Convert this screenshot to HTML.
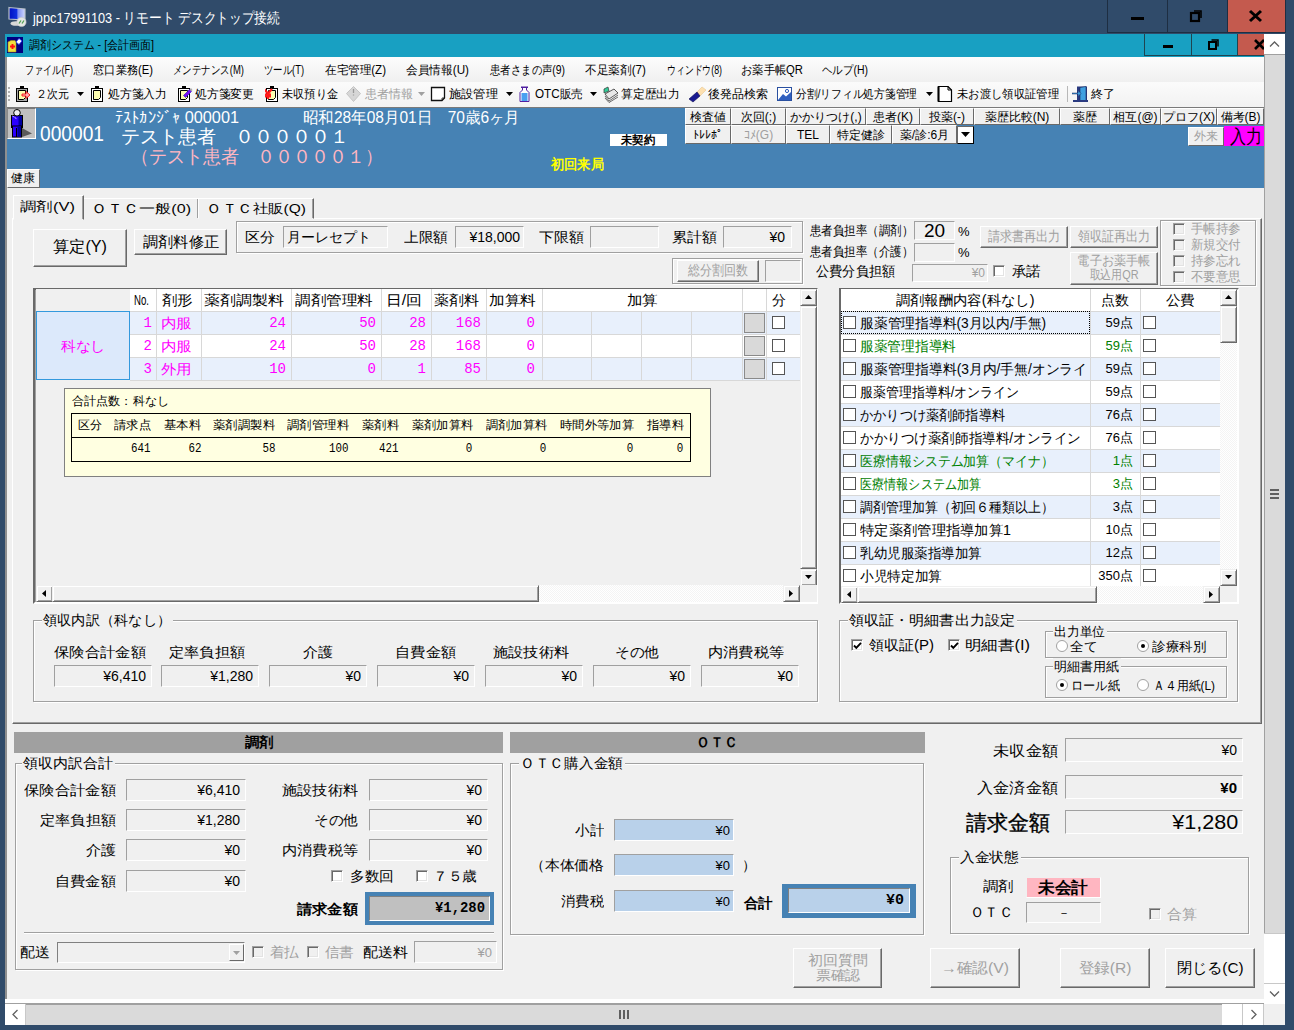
<!DOCTYPE html><html><head><meta charset="utf-8"><style>
*{margin:0;padding:0;box-sizing:border-box}
html,body{width:1294px;height:1030px;overflow:hidden;background:#304b6a;font-family:"Liberation Sans",sans-serif;font-size:12px;color:#000;position:relative}
.a{position:absolute}
.t{position:absolute;white-space:nowrap}
.btn{position:absolute;background:#f0f0f0;border:1px solid;border-color:#fff #696969 #696969 #fff;box-shadow:inset -1px -1px 0 #a0a0a0}
.fld{position:absolute;border:1px solid;border-color:#a0a0a0 #fff #fff #a0a0a0}
.grp{position:absolute;border:1px solid #a0a0a0;box-shadow:inset 1px 1px 0 #fff,1px 1px 0 #fff}
.hb{position:absolute;background:#f0f0f0;border:1px solid;border-color:#fff #696969 #696969 #fff}
</style></head><body><div class="a" style="left:0px;top:0px;width:1294px;height:1030px;background:#304b6a;"></div>
<svg class="a" style="left:7px;top:6px" width="22" height="22"><defs><linearGradient id="scr" x1="0" y1="0" x2="1" y2="0"><stop offset="0" stop-color="#0010c0"/><stop offset=".5" stop-color="#1030e0"/><stop offset=".55" stop-color="#8090f0"/><stop offset="1" stop-color="#d0d8ff"/></linearGradient></defs><path d="M2 1.5 L18 3 V14 L2 13 Z" fill="url(#scr)" stroke="#b8c0c8" stroke-width="1.2"/><ellipse cx="9" cy="17.5" rx="5.5" ry="2.3" fill="#d8d8d8"/><circle cx="14.5" cy="16" r="4.6" fill="#e4e6e4" stroke="#c8c8c8" stroke-width=".6"/><path d="M12 17.5 L14 14.5 M15 17.5 L17 14.5" stroke="#50a050" stroke-width="1.3"/></svg>
<div class="t" style="transform:scaleX(0.8498);transform-origin:left center;top:7.5px;font-size:15px;line-height:19px;color:#fff;left:33px;">jppc17991103 - リモート デスクトップ接続</div>
<div class="a" style="left:1107px;top:0px;width:61px;height:33px;border:1px solid #1e2e42;border-top:none"></div>
<div class="a" style="left:1167px;top:0px;width:61px;height:33px;border:1px solid #1e2e42;border-top:none"></div>
<div class="a" style="left:1227px;top:0px;width:59px;height:33px;background:#c45a4e;border:1px solid #1e2e42;border-top:none"></div>
<div class="a" style="left:1131px;top:17px;width:13px;height:3px;background:#000;"></div>
<svg class="a" style="left:1189px;top:8px" width="16" height="16"><rect x="2" y="5" width="8" height="8" fill="none" stroke="#000" stroke-width="2.2"/><path d="M5 3 H12 V10" fill="none" stroke="#000" stroke-width="1.6"/></svg>
<svg class="a" style="left:1248px;top:9px" width="16" height="14"><path d="M2 2 L13 12 M13 2 L2 12" stroke="#000" stroke-width="3"/></svg>
<div class="a" style="left:5px;top:34px;width:1259px;height:970px;background:#f0f0f0;"></div>
<div class="a" style="left:5px;top:34px;width:2px;height:970px;background:#8f8f8f;"></div>
<div class="a" style="left:5px;top:34px;width:1259px;height:23px;background:#18a0c2;"></div>
<svg class="a" style="left:7px;top:37px" width="16" height="16"><rect width="16" height="16" fill="#000080"/><path d="M1 5 L4 3.5 H8 L9 5 V15 H1 Z" fill="#f0e040" stroke="#a09020" stroke-width=".6"/><path d="M3 9.5 H8 M5.5 7 V12" stroke="#ff1010" stroke-width="1.9"/><path d="M9 5 L12 1.5 L15 4 L12 7.5 Z" fill="#fff" stroke="#2040ff" stroke-width=".8"/></svg>
<div class="t" style="transform:scaleX(0.9101);transform-origin:left center;top:37.0px;font-size:12px;line-height:16px;color:#000;left:29px;">調剤システム - [会計画面]</div>
<div class="a" style="left:1144px;top:34px;width:48px;height:22px;border:1px solid #1f4450;border-top:none"></div>
<div class="a" style="left:1191px;top:34px;width:47px;height:22px;border:1px solid #1f4450;border-top:none;border-left:none"></div>
<div class="a" style="left:1238px;top:34px;width:26px;height:22px;background:#c45a4e;border-bottom:1px solid #1f4450"></div>
<div class="a" style="left:1163px;top:45px;width:10px;height:3px;background:#000;"></div>
<svg class="a" style="left:1207px;top:38px" width="14" height="13"><rect x="2" y="4" width="7" height="7" fill="none" stroke="#000" stroke-width="2"/><path d="M4.5 2 H11 V8.5" fill="none" stroke="#000" stroke-width="1.5"/></svg>
<svg class="a" style="left:1254px;top:39px" width="12" height="12"><path d="M1 1 L10 10 M10 1 L1 10" stroke="#000" stroke-width="2.6"/></svg>
<div class="a" style="left:7px;top:57px;width:1257px;height:25px;background:#f5f5f5;background:linear-gradient(#fcfcfc,#f0f0f0)"></div>
<div class="t" style="transform:scaleX(0.7580);transform-origin:left center;top:62.0px;font-size:12px;line-height:16px;color:#000;left:25px;">ファイル(F)</div>
<div class="t" style="transform:scaleX(0.9375);transform-origin:left center;top:62.0px;font-size:12px;line-height:16px;color:#000;left:93px;">窓口業務(E)</div>
<div class="t" style="transform:scaleX(0.7889);transform-origin:left center;top:62.0px;font-size:12px;line-height:16px;color:#000;left:173px;">メンテナンス(M)</div>
<div class="t" style="transform:scaleX(0.7793);transform-origin:left center;top:62.0px;font-size:12px;line-height:16px;color:#000;left:264px;">ツール(T)</div>
<div class="t" style="transform:scaleX(0.9632);transform-origin:left center;top:62.0px;font-size:12px;line-height:16px;color:#000;left:325px;">在宅管理(Z)</div>
<div class="t" style="transform:scaleX(0.9741);transform-origin:left center;top:62.0px;font-size:12px;line-height:16px;color:#000;left:406px;">会員情報(U)</div>
<div class="t" style="transform:scaleX(0.8653);transform-origin:left center;top:62.0px;font-size:12px;line-height:16px;color:#000;left:490px;">患者さまの声(9)</div>
<div class="t" style="transform:scaleX(0.9733);transform-origin:left center;top:62.0px;font-size:12px;line-height:16px;color:#000;left:585px;">不足薬剤(7)</div>
<div class="t" style="transform:scaleX(0.7366);transform-origin:left center;top:62.0px;font-size:12px;line-height:16px;color:#000;left:667px;">ウィンドウ(8)</div>
<div class="t" style="transform:scaleX(0.9394);transform-origin:left center;top:62.0px;font-size:12px;line-height:16px;color:#000;left:741px;">お薬手帳QR</div>
<div class="t" style="transform:scaleX(0.8733);transform-origin:left center;top:62.0px;font-size:12px;line-height:16px;color:#000;left:822px;">ヘルプ(H)</div>
<div class="a" style="left:7px;top:82px;width:1257px;height:25px;background:linear-gradient(#fbfbfb,#f2f2f2)"></div>
<div class="a" style="left:7px;top:107px;width:1257px;height:1px;background:#7a7a7a;"></div>
<div class="a" style="left:8px;top:87px;width:2px;height:2px;background:#b0b0b0;"></div>
<div class="a" style="left:8px;top:91px;width:2px;height:2px;background:#b0b0b0;"></div>
<div class="a" style="left:8px;top:95px;width:2px;height:2px;background:#b0b0b0;"></div>
<div class="a" style="left:8px;top:99px;width:2px;height:2px;background:#b0b0b0;"></div>
<svg class="a" style="left:15px;top:85px" width="22" height="18"><rect x="1.5" y="3.5" width="11" height="13" fill="#a8a8a8" stroke="#000"/><rect x="5" y="1" width="4" height="2.5" fill="#000"/><path d="M3.5 5.5 H10.5 V12.5 L8.5 14.5 H3.5 Z" fill="#fdfdb0" stroke="#000"/><path d="M7 9 H11 V6.5 L15 10 L11 13.5 V11 H7 Z" fill="#ffb0b0" stroke="#ff1010" stroke-width=".9"/></svg>
<div class="t" style="transform:scaleX(0.9167);transform-origin:left center;top:86.0px;font-size:12px;line-height:16px;color:#000;left:36px;">２次元</div>
<svg class="a" style="left:77px;top:92px" width="7" height="4"><path d="M0 0 H7 L3.5 4 Z" fill="#000"/></svg>
<svg class="a" style="left:90px;top:85px" width="22" height="18"><rect x="1.5" y="3.5" width="11" height="13" fill="#fff" stroke="#000"/><rect x="5" y="1" width="4" height="2.5" fill="#000"/><path d="M3.5 5.5 H10.5 V12.5 L8.5 14.5 H3.5 Z" fill="#fdfdb0" stroke="#000"/></svg>
<div class="t" style="transform:scaleX(0.9833);transform-origin:left center;top:86.0px;font-size:12px;line-height:16px;color:#000;left:108px;">処方箋入力</div>
<svg class="a" style="left:177px;top:85px" width="22" height="18"><rect x="1.5" y="3.5" width="11" height="13" fill="#fff" stroke="#000"/><rect x="5" y="1" width="4" height="2.5" fill="#000"/><path d="M3.5 5.5 H10.5 V12.5 L8.5 14.5 H3.5 Z" fill="#fdfdb0" stroke="#000"/><path d="M6.5 10.5 L12.5 4.5 L14.5 6.5 L8.5 12.5 Z" fill="#7a10f0" stroke="#2010c0" stroke-width=".6"/><path d="M12.5 4.5 L14 3 L15.5 5 L14.5 6.5 Z" fill="#aaa"/></svg>
<div class="t" style="transform:scaleX(0.9833);transform-origin:left center;top:86.0px;font-size:12px;line-height:16px;color:#000;left:195px;">処方箋変更</div>
<svg class="a" style="left:265px;top:85px" width="22" height="18"><rect x="1.5" y="3.5" width="11" height="13" fill="#fff" stroke="#000"/><rect x="5" y="1" width="4" height="2.5" fill="#000"/><path d="M3.5 5.5 H10.5 V12.5 L8.5 14.5 H3.5 Z" fill="#fdfdb0" stroke="#000"/><path d="M-1 4 L3 8.5 L7 4 M3 8.5 V14 M0 9.5 H6 M0 11.5 H6" stroke="#ff1a1a" stroke-width="2.2" fill="none"/></svg>
<div class="t" style="transform:scaleX(0.9333);transform-origin:left center;top:86.0px;font-size:12px;line-height:16px;color:#000;left:282px;">未収預り金</div>
<svg class="a" style="left:345px;top:85px" width="18" height="18"><path d="M8.5 1.5 L15.5 8.5 L8.5 16.5 L1.5 8.5 Z" fill="#d6d6d6" stroke="#c4c4c4"/><path d="M8.5 4 V8 M8.5 9.5 V10.5" stroke="#9a9a9a" stroke-width="1.3"/></svg>
<div class="t" style="transform:scaleX(1.0000);transform-origin:left center;top:86.0px;font-size:12px;line-height:16px;color:#a0a0a0;left:365px;">患者情報</div>
<svg class="a" style="left:418px;top:92px" width="7" height="4"><path d="M0 0 H7 L3.5 4 Z" fill="#a0a0a0"/></svg>
<svg class="a" style="left:430px;top:86px" width="16" height="16"><path d="M1.5 1.5 H14.5 V12 L12 14.5 H1.5 Z" fill="#fff" stroke="#111" stroke-width="1.3"/><path d="M12 14.5 V12 H14.5" fill="none" stroke="#111" stroke-width=".8"/></svg>
<div class="t" style="transform:scaleX(1.0208);transform-origin:left center;top:86.0px;font-size:12px;line-height:16px;color:#000;left:449px;">施設管理</div>
<svg class="a" style="left:506px;top:92px" width="7" height="4"><path d="M0 0 H7 L3.5 4 Z" fill="#000"/></svg>
<svg class="a" style="left:519px;top:86px" width="12" height="16"><rect x="2" y="0.5" width="7" height="1.5" fill="#5020a0"/><path d="M3.5 2 V4 L1 6.5 V15.5 H10 V6.5 L7.5 4 V2" fill="#fff" stroke="#5020a0"/><rect x="2.5" y="7" width="6" height="8" fill="#4aa0f0"/></svg>
<div class="t" style="transform:scaleX(0.9728);transform-origin:left center;top:86.0px;font-size:12px;line-height:16px;color:#000;left:535px;">OTC販売</div>
<svg class="a" style="left:590px;top:92px" width="7" height="4"><path d="M0 0 H7 L3.5 4 Z" fill="#000"/></svg>
<svg class="a" style="left:601px;top:85px" width="18" height="18"><path d="M4 9 L13 4 L17 8 L8 14 Z" fill="#e8e8e8" stroke="#333" stroke-width=".8"/><path d="M4 11 L8 16 L17 10 M4 13 L8 17.5 L17 12" fill="none" stroke="#444" stroke-width=".8"/><path d="M3 8 L3 4 L7 2 L8 6 Z" fill="#3c9" stroke="#333" stroke-width=".7"/></svg>
<div class="t" style="transform:scaleX(0.9833);transform-origin:left center;top:86.0px;font-size:12px;line-height:16px;color:#000;left:621px;">算定歴出力</div>
<svg class="a" style="left:688px;top:85px" width="18" height="18"><path d="M9 7 L14 2 L18 5 L12 11 Z" fill="#fde0b0" stroke="#e8c890" stroke-width=".6"/><path d="M1 14 L9 7 L12 11 L5 17 Z" fill="#1a1a90" stroke="#0a0a50" stroke-width=".6"/></svg>
<div class="t" style="transform:scaleX(1.0000);transform-origin:left center;top:86.0px;font-size:12px;line-height:16px;color:#000;left:708px;">後発品検索</div>
<svg class="a" style="left:777px;top:87px" width="15" height="14"><rect x="0.5" y="0.5" width="14" height="13" fill="#fff" stroke="#2a50a0"/><path d="M1 13 L6 7 L9 9.5 L14 5 V13 Z" fill="#3060c0"/><circle cx="10" cy="4" r="1.6" fill="none" stroke="#3060c0"/></svg>
<div class="t" style="transform:scaleX(0.8940);transform-origin:left center;top:86.0px;font-size:12px;line-height:16px;color:#000;left:796px;">分割/リフィル処方箋管理</div>
<svg class="a" style="left:926px;top:92px" width="7" height="4"><path d="M0 0 H7 L3.5 4 Z" fill="#000"/></svg>
<svg class="a" style="left:937px;top:86px" width="16" height="16"><path d="M1.5 0.5 H11 L14.5 4 V15.5 H1.5 Z" fill="#fff" stroke="#000" stroke-width="1.2"/><rect x="0.5" y="0.5" width="2" height="15" fill="#000"/><path d="M11 0.5 V4 H14.5" fill="none" stroke="#000"/></svg>
<div class="t" style="transform:scaleX(0.9444);transform-origin:left center;top:86.0px;font-size:12px;line-height:16px;color:#000;left:957px;">未お渡し領収証管理</div>
<div class="a" style="left:1067px;top:86px;width:1px;height:16px;background:#b8b8b8;"></div>
<svg class="a" style="left:1072px;top:86px" width="16" height="16"><rect x="5" y="0.5" width="10" height="14" fill="#2a3a80"/><path d="M8 1.5 L14 0.5 V14.5 L8 15.5 Z" fill="#3fa0e0" stroke="#1a2a60" stroke-width=".6"/><path d="M0 7 H6 V4.5 L9 7.5 L6 10.5 V8 H0 Z" fill="#3fa0e0" stroke="#1a2a60" stroke-width=".5"/><rect x="1" y="14" width="15" height="2" fill="#2a3a80"/></svg>
<div class="t" style="transform:scaleX(1.0000);transform-origin:left center;top:86.0px;font-size:12px;line-height:16px;color:#000;left:1091px;">終了</div>
<div class="a" style="left:7px;top:108px;width:1257px;height:80px;background:#4682b4;"></div>
<div class="a" style="left:7px;top:108px;width:29px;height:31px;background:#c0c0c0;border:1px solid;border-color:#7a7a7a #fff #fff #8a8a8a"></div>
<svg class="a" style="left:7px;top:109px" width="28" height="30"><path d="M15 19 L25 24.5 L15 28 Z" fill="#5a5a5a"/><rect x="4.5" y="6.5" width="11" height="12" fill="#2a00ff" stroke="#000"/><path d="M11.5 7 H15 V18 H11.5 Z" fill="#0000a0"/><rect x="5.5" y="17" width="9" height="11" fill="#2a00ff" stroke="#000"/><path d="M10.5 17.5 H14 V27.5 H10.5 Z" fill="#0000a0"/><path d="M9.5 19 V28" stroke="#000"/><path d="M5.5 7 L10 10" stroke="#fff" stroke-width="1" stroke-dasharray="1.5 1"/><circle cx="10" cy="3.8" r="3.3" fill="#f0f0f0" stroke="#000" stroke-width="1"/></svg>
<div class="t" style="transform:scaleX(0.8717);transform-origin:left center;top:121.0px;font-size:22px;line-height:26px;color:#fff;left:40px;">000001</div>
<div class="t" style="transform:scaleX(1.0177);transform-origin:left center;top:107.5px;font-size:16px;line-height:20px;color:#fff;left:115px;">ﾃｽﾄｶﾝｼﾞｬ 000001</div>
<div class="t" style="transform:scaleX(0.9683);transform-origin:left center;top:108.0px;font-size:16px;line-height:20px;color:#fff;left:303px;">昭和28年08月01日　70歳6ヶ月</div>
<div class="t" style="transform:scaleX(1.0000);transform-origin:left center;top:124.5px;font-size:19px;line-height:23px;color:#fff;left:121px;">テスト患者　０００００１</div>
<div class="t" style="transform:scaleX(0.9474);transform-origin:left center;top:144.5px;font-size:19px;line-height:23px;color:#ffb6c1;left:131px;">（テスト患者　０００００１）</div>
<div class="a" style="left:610px;top:134px;width:57px;height:12px;background:#fff;"></div>
<div class="t" style="transform:translateX(-50%) scaleX(0.9444);transform-origin:center center;top:132.0px;font-size:12px;line-height:16px;color:#000;font-weight:bold;left:638px;">未契約</div>
<div class="t" style="transform:scaleX(0.9464);transform-origin:left center;top:155.0px;font-size:14px;line-height:18px;color:#ffff00;font-weight:bold;left:551px;">初回来局</div>
<div class="hb" style="left:7px;top:169px;width:33px;height:19px;"></div>
<div class="t" style="transform:scaleX(1.0000);transform-origin:left center;top:170.0px;font-size:12px;line-height:16px;color:#000;left:11px;">健康</div>
<div class="a" style="left:685px;top:108px;width:894px;height:0px;"></div>
<div class="hb" style="left:685px;top:108px;width:46px;height:17px;"></div>
<div class="t" style="transform:translateX(-50%);transform-origin:center center;top:108.5px;font-size:12px;line-height:16px;color:#000;left:708.0px;">検査値</div>
<div class="hb" style="left:731px;top:108px;width:55px;height:17px;"></div>
<div class="t" style="transform:translateX(-50%);transform-origin:center center;top:108.5px;font-size:12px;line-height:16px;color:#000;left:758.5px;">次回(;)</div>
<div class="hb" style="left:786px;top:108px;width:80px;height:17px;"></div>
<div class="t" style="transform:translateX(-50%);transform-origin:center center;top:108.5px;font-size:12px;line-height:16px;color:#000;left:826.0px;">かかりつけ(,)</div>
<div class="hb" style="left:866px;top:108px;width:54px;height:17px;"></div>
<div class="t" style="transform:translateX(-50%);transform-origin:center center;top:108.5px;font-size:12px;line-height:16px;color:#000;left:893.0px;">患者(K)</div>
<div class="hb" style="left:920px;top:108px;width:54px;height:17px;"></div>
<div class="t" style="transform:translateX(-50%);transform-origin:center center;top:108.5px;font-size:12px;line-height:16px;color:#000;left:947.0px;">投薬(-)</div>
<div class="hb" style="left:974px;top:108px;width:86px;height:17px;"></div>
<div class="t" style="transform:translateX(-50%);transform-origin:center center;top:108.5px;font-size:12px;line-height:16px;color:#000;left:1017.0px;">薬歴比較(N)</div>
<div class="hb" style="left:1060px;top:108px;width:50px;height:17px;"></div>
<div class="t" style="transform:translateX(-50%);transform-origin:center center;top:108.5px;font-size:12px;line-height:16px;color:#000;left:1085.0px;">薬歴</div>
<div class="hb" style="left:1110px;top:108px;width:51px;height:17px;"></div>
<div class="t" style="transform:translateX(-50%);transform-origin:center center;top:108.5px;font-size:12px;line-height:16px;color:#000;left:1135.5px;">相互(@)</div>
<div class="hb" style="left:1161px;top:108px;width:56px;height:17px;"></div>
<div class="t" style="transform:translateX(-50%);transform-origin:center center;top:108.5px;font-size:12px;line-height:16px;color:#000;left:1189.0px;">プロフ(X)</div>
<div class="hb" style="left:1217px;top:108px;width:47px;height:17px;"></div>
<div class="t" style="transform:translateX(-50%);transform-origin:center center;top:108.5px;font-size:12px;line-height:16px;color:#000;left:1240.5px;">備考(B)</div>
<div class="hb" style="left:685px;top:125px;width:46px;height:19px;"></div>
<div class="t" style="transform:translateX(-50%);transform-origin:center center;top:126.5px;font-size:12px;line-height:16px;color:#000;left:708.0px;">ﾄﾚﾚﾎﾟ</div>
<div class="hb" style="left:731px;top:125px;width:55px;height:19px;"></div>
<div class="t" style="transform:translateX(-50%);transform-origin:center center;top:126.5px;font-size:12px;line-height:16px;color:#a0a0a0;left:758.5px;">ｺﾒ(G)</div>
<div class="hb" style="left:786px;top:125px;width:44px;height:19px;"></div>
<div class="t" style="transform:translateX(-50%);transform-origin:center center;top:126.5px;font-size:12px;line-height:16px;color:#000;left:808.0px;">TEL</div>
<div class="hb" style="left:830px;top:125px;width:62px;height:19px;"></div>
<div class="t" style="transform:translateX(-50%);transform-origin:center center;top:126.5px;font-size:12px;line-height:16px;color:#000;left:861.0px;">特定健診</div>
<div class="hb" style="left:892px;top:125px;width:65px;height:19px;"></div>
<div class="t" style="transform:translateX(-50%);transform-origin:center center;top:126.5px;font-size:12px;line-height:16px;color:#000;left:924.5px;">薬/診:6月</div>
<div class="a" style="left:957px;top:126px;width:17px;height:18px;background:#fff;border:1px solid #000;border-top-color:#696969;border-left-color:#696969"></div>
<svg class="a" style="left:961px;top:132px" width="9" height="5"><path d="M0 0 H9 L4.5 5 Z" fill="#000"/></svg>
<div class="hb" style="left:1188px;top:127px;width:36px;height:19px;"></div>
<div class="t" style="transform:translateX(-50%);transform-origin:center center;top:128.0px;font-size:12px;line-height:16px;color:#a0a0a0;left:1206px;">外来</div>
<div class="a" style="left:1224px;top:126px;width:40px;height:20px;background:#ff00ff;"></div>
<div class="t" style="transform:translateX(-50%) scaleX(0.8421);transform-origin:center center;top:124.5px;font-size:19px;line-height:23px;color:#000;left:1246px;">入力</div>
<div class="a" style="left:12px;top:218px;width:1250px;height:506px;border:1px solid;border-color:#fff #696969 #696969 #fff;box-shadow:inset -1px -1px 0 #a0a0a0"></div>
<div class="a" style="left:83px;top:198px;width:116px;height:21px;background:#f0f0f0;border:1px solid;border-color:#fff #696969 transparent #fff;box-shadow:inset -1px 0 0 #a0a0a0"></div>
<div class="t" style="transform:scaleX(1.2362);transform-origin:left center;top:199.5px;font-size:13px;line-height:17px;color:#000;left:91px;">ＯＴＣ一般(0)</div>
<div class="a" style="left:198px;top:198px;width:116px;height:21px;background:#f0f0f0;border:1px solid;border-color:#fff #696969 transparent #fff;box-shadow:inset -1px 0 0 #a0a0a0"></div>
<div class="t" style="transform:scaleX(1.1936);transform-origin:left center;top:199.5px;font-size:13px;line-height:17px;color:#000;left:206px;">ＯＴＣ社販(Q)</div>
<div class="a" style="left:13px;top:195px;width:71px;height:25px;background:#f0f0f0;border:1px solid;border-color:#fff #696969 transparent #fff;box-shadow:inset -1px 0 0 #a0a0a0"></div>
<div class="t" style="transform:scaleX(1.2689);transform-origin:left center;top:197.5px;font-size:13px;line-height:17px;color:#000;left:20px;">調剤(V)</div>
<div class="btn" style="left:33px;top:229px;width:94px;height:38px;"></div>
<div class="t" style="transform:translateX(-50%) scaleX(1.0126);transform-origin:center center;top:237.0px;font-size:16px;line-height:20px;color:#000;left:80.0px;">算定(Y)</div>
<div class="btn" style="left:134px;top:229px;width:93px;height:26px;"></div>
<div class="t" style="transform:translateX(-50%) scaleX(1.0133);transform-origin:center center;top:231.5px;font-size:15px;line-height:19px;color:#000;left:180.5px;">調剤料修正</div>
<div class="grp" style="left:236px;top:221px;width:567px;height:32px;"></div>
<div class="t" style="transform:scaleX(1.0714);transform-origin:left center;top:228.0px;font-size:14px;line-height:18px;color:#000;left:245px;">区分</div>
<div class="fld" style="left:283px;top:226px;width:105px;height:22px;background:#f0f0f0"></div>
<div class="t" style="top:228.0px;font-size:14px;line-height:18px;color:#000;left:287px;">月ーレセプト</div>
<div class="t" style="transform:scaleX(1.0476);transform-origin:left center;top:228.0px;font-size:14px;line-height:18px;color:#000;left:404px;">上限額</div>
<div class="fld" style="left:455px;top:226px;width:69px;height:22px;background:#f0f0f0"></div>
<div class="t" style="top:228.0px;font-size:14px;line-height:18px;color:#000;right:774px;">¥18,000</div>
<div class="t" style="transform:scaleX(1.0714);transform-origin:left center;top:228.0px;font-size:14px;line-height:18px;color:#000;left:539px;">下限額</div>
<div class="fld" style="left:590px;top:226px;width:69px;height:22px;background:#f0f0f0"></div>
<div class="t" style="transform:scaleX(1.0714);transform-origin:left center;top:228.0px;font-size:14px;line-height:18px;color:#000;left:672px;">累計額</div>
<div class="fld" style="left:723px;top:226px;width:69px;height:22px;background:#f0f0f0"></div>
<div class="t" style="top:228.0px;font-size:14px;line-height:18px;color:#000;right:509px;">¥0</div>
<div class="grp" style="left:672px;top:258px;width:131px;height:26px;"></div>
<div class="btn" style="left:677px;top:260px;width:82px;height:22px;"></div>
<div class="t" style="transform:translateX(-50%) scaleX(0.8571);transform-origin:center center;top:261.0px;font-size:14px;line-height:18px;color:#a0a0a0;left:718.0px;">総分割回数</div>
<div class="fld" style="left:765px;top:260px;width:36px;height:22px;background:#f0f0f0"></div>
<div class="t" style="transform:scaleX(0.8803);transform-origin:left center;top:221.5px;font-size:13px;line-height:17px;color:#000;left:810px;">患者負担率（調剤）</div>
<div class="fld" style="left:914px;top:221px;width:41px;height:19px;background:#f0f0f0"></div>
<div class="t" style="transform:translateX(-50%);transform-origin:center center;top:219.0px;font-size:19px;line-height:23px;color:#000;left:934.5px;">20</div>
<div class="t" style="top:222.5px;font-size:13px;line-height:17px;color:#000;left:958px;">%</div>
<div class="t" style="transform:scaleX(0.8803);transform-origin:left center;top:242.5px;font-size:13px;line-height:17px;color:#000;left:810px;">患者負担率（介護）</div>
<div class="fld" style="left:914px;top:243px;width:41px;height:19px;background:#f0f0f0"></div>
<div class="t" style="top:243.5px;font-size:13px;line-height:17px;color:#000;left:958px;">%</div>
<div class="t" style="transform:scaleX(0.9405);transform-origin:left center;top:262.0px;font-size:14px;line-height:18px;color:#000;left:816px;">公費分負担額</div>
<div class="fld" style="left:912px;top:264px;width:76px;height:18px;background:#f0f0f0"></div>
<div class="t" style="top:265.0px;font-size:12px;line-height:16px;color:#a0a0a0;right:309px;">¥0</div>
<div class="a" style="left:993px;top:265px;width:12px;height:12px;border:1px solid;border-color:#a0a0a0 #fff #fff #a0a0a0;box-shadow:inset 1px 1px 0 #696969,inset -1px -1px 0 #e3e3e3;background:#fff"></div>
<div class="t" style="transform:scaleX(1.0357);transform-origin:left center;top:262.0px;font-size:14px;line-height:18px;color:#000;left:1012px;">承諾</div>
<div class="btn" style="left:980px;top:226px;width:88px;height:22px;"></div>
<div class="t" style="transform:translateX(-50%) scaleX(0.8690);transform-origin:center center;top:227.0px;font-size:14px;line-height:18px;color:#a0a0a0;left:1024.0px;">請求書再出力</div>
<div class="btn" style="left:1070px;top:226px;width:88px;height:22px;"></div>
<div class="t" style="transform:translateX(-50%) scaleX(0.8690);transform-origin:center center;top:227.0px;font-size:14px;line-height:18px;color:#a0a0a0;left:1114.0px;">領収証再出力</div>
<div class="btn" style="left:1070px;top:252px;width:88px;height:33px;"></div>
<div class="t" style="transform:translateX(-50%) scaleX(0.9359);transform-origin:center center;top:252.0px;font-size:13px;line-height:17px;color:#a0a0a0;left:1114.0px;">電子お薬手帳</div>
<div class="t" style="transform:translateX(-50%) scaleX(0.8376);transform-origin:center center;top:266.0px;font-size:13px;line-height:17px;color:#a0a0a0;left:1114.0px;">取込用QR</div>
<div class="grp" style="left:1160px;top:220px;width:96px;height:66px;"></div>
<div class="a" style="left:1173px;top:222.5px;width:12px;height:12px;border:1px solid;border-color:#a0a0a0 #fff #fff #a0a0a0;box-shadow:inset 1px 1px 0 #696969,inset -1px -1px 0 #e3e3e3;background:#f0f0f0"></div>
<div class="t" style="transform:scaleX(0.9615);transform-origin:left center;top:220.0px;font-size:13px;line-height:17px;color:#a0a0a0;left:1191px;">手帳持参</div>
<div class="a" style="left:1173px;top:238.5px;width:12px;height:12px;border:1px solid;border-color:#a0a0a0 #fff #fff #a0a0a0;box-shadow:inset 1px 1px 0 #696969,inset -1px -1px 0 #e3e3e3;background:#f0f0f0"></div>
<div class="t" style="transform:scaleX(0.9615);transform-origin:left center;top:236.0px;font-size:13px;line-height:17px;color:#a0a0a0;left:1191px;">新規交付</div>
<div class="a" style="left:1173px;top:254.5px;width:12px;height:12px;border:1px solid;border-color:#a0a0a0 #fff #fff #a0a0a0;box-shadow:inset 1px 1px 0 #696969,inset -1px -1px 0 #e3e3e3;background:#f0f0f0"></div>
<div class="t" style="transform:scaleX(0.9615);transform-origin:left center;top:252.0px;font-size:13px;line-height:17px;color:#a0a0a0;left:1191px;">持参忘れ</div>
<div class="a" style="left:1173px;top:270.5px;width:12px;height:12px;border:1px solid;border-color:#a0a0a0 #fff #fff #a0a0a0;box-shadow:inset 1px 1px 0 #696969,inset -1px -1px 0 #e3e3e3;background:#f0f0f0"></div>
<div class="t" style="transform:scaleX(0.9615);transform-origin:left center;top:268.0px;font-size:13px;line-height:17px;color:#a0a0a0;left:1191px;">不要意思</div>
<div class="a" style="left:33px;top:288px;width:785px;height:316px;background:#f0f0f0;border:2px solid;border-color:#696969 #fff #fff #696969;box-shadow:inset 1px 1px 0 #a0a0a0"></div>
<div class="a" style="left:36px;top:289px;width:94px;height:22px;background:#f0f0f0;"></div>
<div class="a" style="left:130px;top:289px;width:670px;height:22px;background:#fff;"></div>
<div class="t" style="transform:scaleX(0.6882);transform-origin:left center;top:291.0px;font-size:14px;line-height:18px;color:#000;left:134px;">No.</div>
<div class="t" style="transform:scaleX(1.1071);transform-origin:left center;top:291.0px;font-size:14px;line-height:18px;color:#000;left:162px;">剤形</div>
<div class="t" style="transform:scaleX(1.1429);transform-origin:left center;top:291.0px;font-size:14px;line-height:18px;color:#000;left:204px;">薬剤調製料</div>
<div class="t" style="transform:scaleX(1.1143);transform-origin:left center;top:291.0px;font-size:14px;line-height:18px;color:#000;left:295px;">調剤管理料</div>
<div class="t" style="transform:scaleX(1.1289);transform-origin:left center;top:291.0px;font-size:14px;line-height:18px;color:#000;left:386px;">日/回</div>
<div class="t" style="transform:scaleX(1.0714);transform-origin:left center;top:291.0px;font-size:14px;line-height:18px;color:#000;left:434px;">薬剤料</div>
<div class="t" style="transform:scaleX(1.1190);transform-origin:left center;top:291.0px;font-size:14px;line-height:18px;color:#000;left:489px;">加算料</div>
<div class="t" style="transform:translateX(-50%) scaleX(1.1071);transform-origin:center center;top:291.0px;font-size:14px;line-height:18px;color:#000;left:642px;">加算</div>
<div class="t" style="transform:translateX(-50%) scaleX(1.0000);transform-origin:center center;top:291.0px;font-size:14px;line-height:18px;color:#000;left:779px;">分</div>
<div class="a" style="left:130px;top:311px;width:670px;height:23px;background:#e8f0fc;"></div>
<div class="a" style="left:130px;top:334px;width:670px;height:23px;background:#fff;"></div>
<div class="a" style="left:130px;top:357px;width:670px;height:23px;background:#e8f0fc;"></div>
<div class="a" style="left:156px;top:289px;width:1px;height:91px;background:#d8d8d8;"></div>
<div class="a" style="left:201px;top:289px;width:1px;height:91px;background:#d8d8d8;"></div>
<div class="a" style="left:291px;top:289px;width:1px;height:91px;background:#d8d8d8;"></div>
<div class="a" style="left:381px;top:289px;width:1px;height:91px;background:#d8d8d8;"></div>
<div class="a" style="left:431px;top:289px;width:1px;height:91px;background:#d8d8d8;"></div>
<div class="a" style="left:486px;top:289px;width:1px;height:91px;background:#d8d8d8;"></div>
<div class="a" style="left:542px;top:289px;width:1px;height:91px;background:#d8d8d8;"></div>
<div class="a" style="left:742px;top:289px;width:1px;height:91px;background:#d8d8d8;"></div>
<div class="a" style="left:766px;top:289px;width:1px;height:91px;background:#d8d8d8;"></div>
<div class="a" style="left:591px;top:311px;width:1px;height:69px;background:#d8d8d8;"></div>
<div class="a" style="left:641px;top:311px;width:1px;height:69px;background:#d8d8d8;"></div>
<div class="a" style="left:691px;top:311px;width:1px;height:69px;background:#d8d8d8;"></div>
<div class="a" style="left:130px;top:311px;width:670px;height:1px;background:#d8d8d8;"></div>
<div class="a" style="left:130px;top:334px;width:670px;height:1px;background:#d8d8d8;"></div>
<div class="a" style="left:130px;top:357px;width:670px;height:1px;background:#d8d8d8;"></div>
<div class="a" style="left:130px;top:380px;width:670px;height:1px;background:#d8d8d8;"></div>
<div class="a" style="left:36px;top:311px;width:94px;height:69px;background:#dce9fb;border:1px solid #3399dd"></div>
<div class="t" style="transform:translateX(-50%) scaleX(1.0714);transform-origin:center center;top:337.0px;font-size:14px;line-height:18px;color:#ff00ff;left:83px;">科なし</div>
<div class="t" style="top:314.0px;font-size:14px;line-height:18px;color:#ff00ff;font-family:'Liberation Mono',monospace;right:1142px;">1</div>
<div class="t" style="transform:scaleX(1.1071);transform-origin:left center;top:314.0px;font-size:14px;line-height:18px;color:#ff00ff;left:161px;">内服</div>
<div class="t" style="top:314.0px;font-size:14px;line-height:18px;color:#ff00ff;font-family:'Liberation Mono',monospace;right:1008px;">24</div>
<div class="t" style="top:314.0px;font-size:14px;line-height:18px;color:#ff00ff;font-family:'Liberation Mono',monospace;right:918px;">50</div>
<div class="t" style="top:314.0px;font-size:14px;line-height:18px;color:#ff00ff;font-family:'Liberation Mono',monospace;right:868px;">28</div>
<div class="t" style="top:314.0px;font-size:14px;line-height:18px;color:#ff00ff;font-family:'Liberation Mono',monospace;right:813px;">168</div>
<div class="t" style="top:314.0px;font-size:14px;line-height:18px;color:#ff00ff;font-family:'Liberation Mono',monospace;right:759px;">0</div>
<div class="a" style="left:744px;top:313px;width:21px;height:20px;background:#d9d9d9;border:1px solid #8a8a8a"></div>
<div class="a" style="left:772px;top:316px;width:13px;height:13px;border:1px solid #555;background:#fff"></div>
<div class="t" style="top:337.0px;font-size:14px;line-height:18px;color:#ff00ff;font-family:'Liberation Mono',monospace;right:1142px;">2</div>
<div class="t" style="transform:scaleX(1.1071);transform-origin:left center;top:337.0px;font-size:14px;line-height:18px;color:#ff00ff;left:161px;">内服</div>
<div class="t" style="top:337.0px;font-size:14px;line-height:18px;color:#ff00ff;font-family:'Liberation Mono',monospace;right:1008px;">24</div>
<div class="t" style="top:337.0px;font-size:14px;line-height:18px;color:#ff00ff;font-family:'Liberation Mono',monospace;right:918px;">50</div>
<div class="t" style="top:337.0px;font-size:14px;line-height:18px;color:#ff00ff;font-family:'Liberation Mono',monospace;right:868px;">28</div>
<div class="t" style="top:337.0px;font-size:14px;line-height:18px;color:#ff00ff;font-family:'Liberation Mono',monospace;right:813px;">168</div>
<div class="t" style="top:337.0px;font-size:14px;line-height:18px;color:#ff00ff;font-family:'Liberation Mono',monospace;right:759px;">0</div>
<div class="a" style="left:744px;top:336px;width:21px;height:20px;background:#d9d9d9;border:1px solid #8a8a8a"></div>
<div class="a" style="left:772px;top:339px;width:13px;height:13px;border:1px solid #555;background:#fff"></div>
<div class="t" style="top:360.0px;font-size:14px;line-height:18px;color:#ff00ff;font-family:'Liberation Mono',monospace;right:1142px;">3</div>
<div class="t" style="transform:scaleX(1.1071);transform-origin:left center;top:360.0px;font-size:14px;line-height:18px;color:#ff00ff;left:161px;">外用</div>
<div class="t" style="top:360.0px;font-size:14px;line-height:18px;color:#ff00ff;font-family:'Liberation Mono',monospace;right:1008px;">10</div>
<div class="t" style="top:360.0px;font-size:14px;line-height:18px;color:#ff00ff;font-family:'Liberation Mono',monospace;right:918px;">0</div>
<div class="t" style="top:360.0px;font-size:14px;line-height:18px;color:#ff00ff;font-family:'Liberation Mono',monospace;right:868px;">1</div>
<div class="t" style="top:360.0px;font-size:14px;line-height:18px;color:#ff00ff;font-family:'Liberation Mono',monospace;right:813px;">85</div>
<div class="t" style="top:360.0px;font-size:14px;line-height:18px;color:#ff00ff;font-family:'Liberation Mono',monospace;right:759px;">0</div>
<div class="a" style="left:744px;top:359px;width:21px;height:20px;background:#d9d9d9;border:1px solid #8a8a8a"></div>
<div class="a" style="left:772px;top:362px;width:13px;height:13px;border:1px solid #555;background:#fff"></div>
<div class="a" style="left:800px;top:289px;width:17px;height:297px;background:#f0f0f0"></div>
<div class="hb" style="left:800px;top:289px;width:17px;height:17px;border-color:#f0f0f0 #696969 #696969 #f0f0f0;box-shadow:inset 1px 1px 0 #fff,inset -1px -1px 0 #a0a0a0"></div>
<svg class="a" style="left:805px;top:295px" width="7" height="4"><path d="M0 4 H7 L3.5 0 Z" fill="#000"/></svg>
<div class="hb" style="left:800px;top:569px;width:17px;height:17px;border-color:#f0f0f0 #696969 #696969 #f0f0f0;box-shadow:inset 1px 1px 0 #fff,inset -1px -1px 0 #a0a0a0"></div>
<svg class="a" style="left:805px;top:575px" width="7" height="4"><path d="M0 0 H7 L3.5 4 Z" fill="#000"/></svg>
<div class="hb" style="left:800px;top:306px;width:17px;height:263px;border-color:#f0f0f0 #696969 #696969 #f0f0f0;box-shadow:inset 1px 1px 0 #fff,inset -1px -1px 0 #a0a0a0"></div>
<div class="a" style="left:36px;top:585px;width:764px;height:17px;background:repeating-conic-gradient(#f4f4f4 0 25%,#fff 0 50%) 0 0/2px 2px"></div>
<div class="hb" style="left:36px;top:585px;width:17px;height:17px;border-color:#f0f0f0 #696969 #696969 #f0f0f0;box-shadow:inset 1px 1px 0 #fff,inset -1px -1px 0 #a0a0a0"></div>
<svg class="a" style="left:42px;top:590px" width="4" height="7"><path d="M4 0 V7 L0 3.5 Z" fill="#000"/></svg>
<div class="hb" style="left:783px;top:585px;width:17px;height:17px;border-color:#f0f0f0 #696969 #696969 #f0f0f0;box-shadow:inset 1px 1px 0 #fff,inset -1px -1px 0 #a0a0a0"></div>
<svg class="a" style="left:789px;top:590px" width="4" height="7"><path d="M0 0 V7 L4 3.5 Z" fill="#000"/></svg>
<div class="hb" style="left:52px;top:585px;width:487px;height:17px;border-color:#f0f0f0 #696969 #696969 #f0f0f0;box-shadow:inset 1px 1px 0 #fff,inset -1px -1px 0 #a0a0a0"></div>
<div class="a" style="left:800px;top:585px;width:17px;height:17px;background:#f0f0f0;"></div>
<div class="a" style="left:64px;top:388px;width:647px;height:89px;background:#ffffe1;border:1px solid #808080"></div>
<div class="t" style="transform:scaleX(1.0104);transform-origin:left center;top:393.0px;font-size:12px;line-height:16px;color:#000;left:72px;">合計点数：科なし</div>
<div class="a" style="left:71px;top:413px;width:620px;height:1px;background:#000;"></div>
<div class="a" style="left:71px;top:437px;width:620px;height:1px;background:#000;"></div>
<div class="a" style="left:71px;top:461px;width:620px;height:1px;background:#000;"></div>
<div class="a" style="left:71px;top:413px;width:1px;height:49px;background:#000;"></div>
<div class="a" style="left:690px;top:413px;width:1px;height:49px;background:#000;"></div>
<div class="t" style="transform:scaleX(1.0000);transform-origin:left center;top:417.0px;font-size:12px;line-height:16px;color:#000;left:78px;">区分</div>
<div class="t" style="transform:scaleX(1.0278);transform-origin:left center;top:417.0px;font-size:12px;line-height:16px;color:#000;left:114px;">請求点</div>
<div class="t" style="transform:scaleX(1.0278);transform-origin:left center;top:417.0px;font-size:12px;line-height:16px;color:#000;left:164px;">基本料</div>
<div class="t" style="transform:scaleX(1.0333);transform-origin:left center;top:417.0px;font-size:12px;line-height:16px;color:#000;left:213px;">薬剤調製料</div>
<div class="t" style="transform:scaleX(1.0333);transform-origin:left center;top:417.0px;font-size:12px;line-height:16px;color:#000;left:287px;">調剤管理料</div>
<div class="t" style="transform:scaleX(1.0278);transform-origin:left center;top:417.0px;font-size:12px;line-height:16px;color:#000;left:362px;">薬剤料</div>
<div class="t" style="transform:scaleX(1.0167);transform-origin:left center;top:417.0px;font-size:12px;line-height:16px;color:#000;left:412px;">薬剤加算料</div>
<div class="t" style="transform:scaleX(1.0167);transform-origin:left center;top:417.0px;font-size:12px;line-height:16px;color:#000;left:486px;">調剤加算料</div>
<div class="t" style="transform:scaleX(1.0278);transform-origin:left center;top:417.0px;font-size:12px;line-height:16px;color:#000;left:560px;">時間外等加算</div>
<div class="t" style="transform:scaleX(1.0278);transform-origin:left center;top:417.0px;font-size:12px;line-height:16px;color:#000;left:647px;">指導料</div>
<div class="t" style="transform:scaleX(0.9024);transform-origin:right center;top:441.0px;font-size:12px;line-height:16px;color:#000;font-family:'Liberation Mono',monospace;right:1143px;">641</div>
<div class="t" style="transform:scaleX(0.9024);transform-origin:right center;top:441.0px;font-size:12px;line-height:16px;color:#000;font-family:'Liberation Mono',monospace;right:1093px;">62</div>
<div class="t" style="transform:scaleX(0.9024);transform-origin:right center;top:441.0px;font-size:12px;line-height:16px;color:#000;font-family:'Liberation Mono',monospace;right:1019px;">58</div>
<div class="t" style="transform:scaleX(0.9024);transform-origin:right center;top:441.0px;font-size:12px;line-height:16px;color:#000;font-family:'Liberation Mono',monospace;right:945px;">100</div>
<div class="t" style="transform:scaleX(0.9024);transform-origin:right center;top:441.0px;font-size:12px;line-height:16px;color:#000;font-family:'Liberation Mono',monospace;right:895px;">421</div>
<div class="t" style="transform:scaleX(0.9024);transform-origin:right center;top:441.0px;font-size:12px;line-height:16px;color:#000;font-family:'Liberation Mono',monospace;right:822px;">0</div>
<div class="t" style="transform:scaleX(0.9024);transform-origin:right center;top:441.0px;font-size:12px;line-height:16px;color:#000;font-family:'Liberation Mono',monospace;right:748px;">0</div>
<div class="t" style="transform:scaleX(0.9024);transform-origin:right center;top:441.0px;font-size:12px;line-height:16px;color:#000;font-family:'Liberation Mono',monospace;right:661px;">0</div>
<div class="t" style="transform:scaleX(0.9024);transform-origin:right center;top:441.0px;font-size:12px;line-height:16px;color:#000;font-family:'Liberation Mono',monospace;right:611px;">0</div>
<div class="a" style="left:839px;top:288px;width:400px;height:316px;background:#f0f0f0;border:2px solid;border-color:#696969 #fff #fff #696969;box-shadow:inset 1px 1px 0 #a0a0a0"></div>
<div class="a" style="left:841px;top:289px;width:379px;height:22px;background:#fff;"></div>
<div class="a" style="left:1090px;top:289px;width:1px;height:297px;background:#d8d8d8;"></div>
<div class="a" style="left:1140px;top:289px;width:1px;height:297px;background:#d8d8d8;"></div>
<div class="t" style="transform:translateX(-50%) scaleX(1.0271);transform-origin:center center;top:291.0px;font-size:14px;line-height:18px;color:#000;left:965px;">調剤報酬内容(科なし)</div>
<div class="t" style="transform:translateX(-50%) scaleX(1.0000);transform-origin:center center;top:291.0px;font-size:14px;line-height:18px;color:#000;left:1115px;">点数</div>
<div class="t" style="transform:translateX(-50%) scaleX(1.0357);transform-origin:center center;top:291.0px;font-size:14px;line-height:18px;color:#000;left:1180px;">公費</div>
<div class="a" style="left:841px;top:311px;width:379px;height:23px;background:#e8f0fc;"></div>
<div class="a" style="left:841px;top:311px;width:379px;height:1px;background:#d8d8d8;"></div>
<div class="a" style="left:1090px;top:311px;width:1px;height:23px;background:#d8d8d8;"></div>
<div class="a" style="left:1140px;top:311px;width:1px;height:23px;background:#d8d8d8;"></div>
<div class="a" style="left:843px;top:316px;width:13px;height:13px;border:1px solid #555;background:#fff"></div>
<div class="t" style="transform:scaleX(0.9841);transform-origin:left center;top:313.5px;font-size:14px;line-height:18px;color:#000;left:860px;">服薬管理指導料(3月以内/手無)</div>
<div class="t" style="top:314.0px;font-size:13px;line-height:17px;color:#000;right:161px;">59点</div>
<div class="a" style="left:1143px;top:316px;width:13px;height:13px;border:1px solid #555;background:#fff"></div>
<div class="a" style="left:841px;top:334px;width:379px;height:23px;background:#fff;"></div>
<div class="a" style="left:841px;top:334px;width:379px;height:1px;background:#d8d8d8;"></div>
<div class="a" style="left:1090px;top:334px;width:1px;height:23px;background:#d8d8d8;"></div>
<div class="a" style="left:1140px;top:334px;width:1px;height:23px;background:#d8d8d8;"></div>
<div class="a" style="left:843px;top:339px;width:13px;height:13px;border:1px solid #555;background:#fff"></div>
<div class="t" style="transform:scaleX(0.9796);transform-origin:left center;top:336.5px;font-size:14px;line-height:18px;color:#008000;left:860px;">服薬管理指導料</div>
<div class="t" style="top:337.0px;font-size:13px;line-height:17px;color:#008000;right:161px;">59点</div>
<div class="a" style="left:1143px;top:339px;width:13px;height:13px;border:1px solid #555;background:#fff"></div>
<div class="a" style="left:841px;top:357px;width:379px;height:23px;background:#e8f0fc;"></div>
<div class="a" style="left:841px;top:357px;width:379px;height:1px;background:#d8d8d8;"></div>
<div class="a" style="left:1090px;top:357px;width:1px;height:23px;background:#d8d8d8;"></div>
<div class="a" style="left:1140px;top:357px;width:1px;height:23px;background:#d8d8d8;"></div>
<div class="a" style="left:843px;top:362px;width:13px;height:13px;border:1px solid #555;background:#fff"></div>
<div class="t" style="transform:scaleX(0.9860);transform-origin:left center;top:359.5px;font-size:14px;line-height:18px;color:#000;left:860px;">服薬管理指導料(3月内/手無/オンライ</div>
<div class="t" style="top:360.0px;font-size:13px;line-height:17px;color:#000;right:161px;">59点</div>
<div class="a" style="left:1143px;top:362px;width:13px;height:13px;border:1px solid #555;background:#fff"></div>
<div class="a" style="left:841px;top:380px;width:379px;height:23px;background:#fff;"></div>
<div class="a" style="left:841px;top:380px;width:379px;height:1px;background:#d8d8d8;"></div>
<div class="a" style="left:1090px;top:380px;width:1px;height:23px;background:#d8d8d8;"></div>
<div class="a" style="left:1140px;top:380px;width:1px;height:23px;background:#d8d8d8;"></div>
<div class="a" style="left:843px;top:385px;width:13px;height:13px;border:1px solid #555;background:#fff"></div>
<div class="t" style="transform:scaleX(0.9250);transform-origin:left center;top:382.5px;font-size:14px;line-height:18px;color:#000;left:860px;">服薬管理指導料/オンライン</div>
<div class="t" style="top:383.0px;font-size:13px;line-height:17px;color:#000;right:161px;">59点</div>
<div class="a" style="left:1143px;top:385px;width:13px;height:13px;border:1px solid #555;background:#fff"></div>
<div class="a" style="left:841px;top:403px;width:379px;height:23px;background:#e8f0fc;"></div>
<div class="a" style="left:841px;top:403px;width:379px;height:1px;background:#d8d8d8;"></div>
<div class="a" style="left:1090px;top:403px;width:1px;height:23px;background:#d8d8d8;"></div>
<div class="a" style="left:1140px;top:403px;width:1px;height:23px;background:#d8d8d8;"></div>
<div class="a" style="left:843px;top:408px;width:13px;height:13px;border:1px solid #555;background:#fff"></div>
<div class="t" style="transform:scaleX(0.9416);transform-origin:left center;top:405.5px;font-size:14px;line-height:18px;color:#000;left:860px;">かかりつけ薬剤師指導料</div>
<div class="t" style="top:406.0px;font-size:13px;line-height:17px;color:#000;right:161px;">76点</div>
<div class="a" style="left:1143px;top:408px;width:13px;height:13px;border:1px solid #555;background:#fff"></div>
<div class="a" style="left:841px;top:426px;width:379px;height:23px;background:#fff;"></div>
<div class="a" style="left:841px;top:426px;width:379px;height:1px;background:#d8d8d8;"></div>
<div class="a" style="left:1090px;top:426px;width:1px;height:23px;background:#d8d8d8;"></div>
<div class="a" style="left:1140px;top:426px;width:1px;height:23px;background:#d8d8d8;"></div>
<div class="a" style="left:843px;top:431px;width:13px;height:13px;border:1px solid #555;background:#fff"></div>
<div class="t" style="transform:scaleX(0.9698);transform-origin:left center;top:428.5px;font-size:14px;line-height:18px;color:#000;left:860px;">かかりつけ薬剤師指導料/オンライン</div>
<div class="t" style="top:429.0px;font-size:13px;line-height:17px;color:#000;right:161px;">76点</div>
<div class="a" style="left:1143px;top:431px;width:13px;height:13px;border:1px solid #555;background:#fff"></div>
<div class="a" style="left:841px;top:449px;width:379px;height:23px;background:#e8f0fc;"></div>
<div class="a" style="left:841px;top:449px;width:379px;height:1px;background:#d8d8d8;"></div>
<div class="a" style="left:1090px;top:449px;width:1px;height:23px;background:#d8d8d8;"></div>
<div class="a" style="left:1140px;top:449px;width:1px;height:23px;background:#d8d8d8;"></div>
<div class="a" style="left:843px;top:454px;width:13px;height:13px;border:1px solid #555;background:#fff"></div>
<div class="t" style="transform:scaleX(0.9238);transform-origin:left center;top:451.5px;font-size:14px;line-height:18px;color:#008000;left:860px;">医療情報システム加算（マイナ）</div>
<div class="t" style="top:452.0px;font-size:13px;line-height:17px;color:#008000;right:161px;">1点</div>
<div class="a" style="left:1143px;top:454px;width:13px;height:13px;border:1px solid #555;background:#fff"></div>
<div class="a" style="left:841px;top:472px;width:379px;height:23px;background:#fff;"></div>
<div class="a" style="left:841px;top:472px;width:379px;height:1px;background:#d8d8d8;"></div>
<div class="a" style="left:1090px;top:472px;width:1px;height:23px;background:#d8d8d8;"></div>
<div class="a" style="left:1140px;top:472px;width:1px;height:23px;background:#d8d8d8;"></div>
<div class="a" style="left:843px;top:477px;width:13px;height:13px;border:1px solid #555;background:#fff"></div>
<div class="t" style="transform:scaleX(0.8643);transform-origin:left center;top:474.5px;font-size:14px;line-height:18px;color:#008000;left:860px;">医療情報システム加算</div>
<div class="t" style="top:475.0px;font-size:13px;line-height:17px;color:#008000;right:161px;">3点</div>
<div class="a" style="left:1143px;top:477px;width:13px;height:13px;border:1px solid #555;background:#fff"></div>
<div class="a" style="left:841px;top:495px;width:379px;height:23px;background:#e8f0fc;"></div>
<div class="a" style="left:841px;top:495px;width:379px;height:1px;background:#d8d8d8;"></div>
<div class="a" style="left:1090px;top:495px;width:1px;height:23px;background:#d8d8d8;"></div>
<div class="a" style="left:1140px;top:495px;width:1px;height:23px;background:#d8d8d8;"></div>
<div class="a" style="left:843px;top:500px;width:13px;height:13px;border:1px solid #555;background:#fff"></div>
<div class="t" style="transform:scaleX(0.9238);transform-origin:left center;top:497.5px;font-size:14px;line-height:18px;color:#000;left:860px;">調剤管理加算（初回６種類以上）</div>
<div class="t" style="top:498.0px;font-size:13px;line-height:17px;color:#000;right:161px;">3点</div>
<div class="a" style="left:1143px;top:500px;width:13px;height:13px;border:1px solid #555;background:#fff"></div>
<div class="a" style="left:841px;top:518px;width:379px;height:23px;background:#fff;"></div>
<div class="a" style="left:841px;top:518px;width:379px;height:1px;background:#d8d8d8;"></div>
<div class="a" style="left:1090px;top:518px;width:1px;height:23px;background:#d8d8d8;"></div>
<div class="a" style="left:1140px;top:518px;width:1px;height:23px;background:#d8d8d8;"></div>
<div class="a" style="left:843px;top:523px;width:13px;height:13px;border:1px solid #555;background:#fff"></div>
<div class="t" style="transform:scaleX(1.0217);transform-origin:left center;top:520.5px;font-size:14px;line-height:18px;color:#000;left:860px;">特定薬剤管理指導加算1</div>
<div class="t" style="top:521.0px;font-size:13px;line-height:17px;color:#000;right:161px;">10点</div>
<div class="a" style="left:1143px;top:523px;width:13px;height:13px;border:1px solid #555;background:#fff"></div>
<div class="a" style="left:841px;top:541px;width:379px;height:23px;background:#e8f0fc;"></div>
<div class="a" style="left:841px;top:541px;width:379px;height:1px;background:#d8d8d8;"></div>
<div class="a" style="left:1090px;top:541px;width:1px;height:23px;background:#d8d8d8;"></div>
<div class="a" style="left:1140px;top:541px;width:1px;height:23px;background:#d8d8d8;"></div>
<div class="a" style="left:843px;top:546px;width:13px;height:13px;border:1px solid #555;background:#fff"></div>
<div class="t" style="transform:scaleX(0.9683);transform-origin:left center;top:543.5px;font-size:14px;line-height:18px;color:#000;left:860px;">乳幼児服薬指導加算</div>
<div class="t" style="top:544.0px;font-size:13px;line-height:17px;color:#000;right:161px;">12点</div>
<div class="a" style="left:1143px;top:546px;width:13px;height:13px;border:1px solid #555;background:#fff"></div>
<div class="a" style="left:841px;top:564px;width:379px;height:23px;background:#fff;"></div>
<div class="a" style="left:841px;top:564px;width:379px;height:1px;background:#d8d8d8;"></div>
<div class="a" style="left:1090px;top:564px;width:1px;height:23px;background:#d8d8d8;"></div>
<div class="a" style="left:1140px;top:564px;width:1px;height:23px;background:#d8d8d8;"></div>
<div class="a" style="left:843px;top:569px;width:13px;height:13px;border:1px solid #555;background:#fff"></div>
<div class="t" style="transform:scaleX(0.9762);transform-origin:left center;top:566.5px;font-size:14px;line-height:18px;color:#000;left:860px;">小児特定加算</div>
<div class="t" style="top:567.0px;font-size:13px;line-height:17px;color:#000;right:161px;">350点</div>
<div class="a" style="left:1143px;top:569px;width:13px;height:13px;border:1px solid #555;background:#fff"></div>
<div class="a" style="left:841px;top:311px;width:249px;height:23px;border:1px dotted #000"></div>
<div class="a" style="left:1220px;top:289px;width:17px;height:297px;background:repeating-conic-gradient(#f4f4f4 0 25%,#fff 0 50%) 0 0/2px 2px"></div>
<div class="hb" style="left:1220px;top:289px;width:17px;height:17px;border-color:#f0f0f0 #696969 #696969 #f0f0f0;box-shadow:inset 1px 1px 0 #fff,inset -1px -1px 0 #a0a0a0"></div>
<svg class="a" style="left:1225px;top:295px" width="7" height="4"><path d="M0 4 H7 L3.5 0 Z" fill="#000"/></svg>
<div class="hb" style="left:1220px;top:569px;width:17px;height:17px;border-color:#f0f0f0 #696969 #696969 #f0f0f0;box-shadow:inset 1px 1px 0 #fff,inset -1px -1px 0 #a0a0a0"></div>
<svg class="a" style="left:1225px;top:575px" width="7" height="4"><path d="M0 0 H7 L3.5 4 Z" fill="#000"/></svg>
<div class="hb" style="left:1220px;top:306px;width:17px;height:37px;border-color:#f0f0f0 #696969 #696969 #f0f0f0;box-shadow:inset 1px 1px 0 #fff,inset -1px -1px 0 #a0a0a0"></div>
<div class="a" style="left:841px;top:586px;width:379px;height:17px;background:repeating-conic-gradient(#f4f4f4 0 25%,#fff 0 50%) 0 0/2px 2px"></div>
<div class="hb" style="left:841px;top:586px;width:17px;height:17px;border-color:#f0f0f0 #696969 #696969 #f0f0f0;box-shadow:inset 1px 1px 0 #fff,inset -1px -1px 0 #a0a0a0"></div>
<svg class="a" style="left:847px;top:591px" width="4" height="7"><path d="M4 0 V7 L0 3.5 Z" fill="#000"/></svg>
<div class="hb" style="left:1203px;top:586px;width:17px;height:17px;border-color:#f0f0f0 #696969 #696969 #f0f0f0;box-shadow:inset 1px 1px 0 #fff,inset -1px -1px 0 #a0a0a0"></div>
<svg class="a" style="left:1209px;top:591px" width="4" height="7"><path d="M0 0 V7 L4 3.5 Z" fill="#000"/></svg>
<div class="hb" style="left:857px;top:586px;width:240px;height:17px;border-color:#f0f0f0 #696969 #696969 #f0f0f0;box-shadow:inset 1px 1px 0 #fff,inset -1px -1px 0 #a0a0a0"></div>
<div class="grp" style="left:33px;top:620px;width:785px;height:82px;"></div>
<div class="t" style="transform:scaleX(1.0155);transform-origin:left center;top:611.0px;font-size:14px;line-height:18px;color:#000;left:42px;background:#f0f0f0;padding:0 2px 0 1px;">領収内訳（科なし）</div>
<div class="t" style="transform:scaleX(1.0952);transform-origin:left center;top:643.0px;font-size:14px;line-height:18px;color:#000;left:54px;">保険合計金額</div>
<div class="t" style="transform:scaleX(1.0857);transform-origin:left center;top:643.0px;font-size:14px;line-height:18px;color:#000;left:169px;">定率負担額</div>
<div class="t" style="transform:scaleX(1.0714);transform-origin:left center;top:643.0px;font-size:14px;line-height:18px;color:#000;left:303px;">介護</div>
<div class="t" style="transform:scaleX(1.0893);transform-origin:left center;top:643.0px;font-size:14px;line-height:18px;color:#000;left:395px;">自費金額</div>
<div class="t" style="transform:scaleX(1.0857);transform-origin:left center;top:643.0px;font-size:14px;line-height:18px;color:#000;left:493px;">施設技術料</div>
<div class="t" style="transform:scaleX(1.0476);transform-origin:left center;top:643.0px;font-size:14px;line-height:18px;color:#000;left:615px;">その他</div>
<div class="t" style="transform:scaleX(1.0857);transform-origin:left center;top:643.0px;font-size:14px;line-height:18px;color:#000;left:708px;">内消費税等</div>
<div class="fld" style="left:54px;top:665px;width:98px;height:22px;background:#f0f0f0"></div>
<div class="t" style="top:667.0px;font-size:14px;line-height:18px;color:#000;right:1148px;">¥6,410</div>
<div class="fld" style="left:161px;top:665px;width:98px;height:22px;background:#f0f0f0"></div>
<div class="t" style="top:667.0px;font-size:14px;line-height:18px;color:#000;right:1041px;">¥1,280</div>
<div class="fld" style="left:269px;top:665px;width:98px;height:22px;background:#f0f0f0"></div>
<div class="t" style="top:667.0px;font-size:14px;line-height:18px;color:#000;right:933px;">¥0</div>
<div class="fld" style="left:377px;top:665px;width:98px;height:22px;background:#f0f0f0"></div>
<div class="t" style="top:667.0px;font-size:14px;line-height:18px;color:#000;right:825px;">¥0</div>
<div class="fld" style="left:485px;top:665px;width:98px;height:22px;background:#f0f0f0"></div>
<div class="t" style="top:667.0px;font-size:14px;line-height:18px;color:#000;right:717px;">¥0</div>
<div class="fld" style="left:593px;top:665px;width:98px;height:22px;background:#f0f0f0"></div>
<div class="t" style="top:667.0px;font-size:14px;line-height:18px;color:#000;right:609px;">¥0</div>
<div class="fld" style="left:701px;top:665px;width:98px;height:22px;background:#f0f0f0"></div>
<div class="t" style="top:667.0px;font-size:14px;line-height:18px;color:#000;right:501px;">¥0</div>
<div class="grp" style="left:839px;top:620px;width:399px;height:82px;"></div>
<div class="t" style="transform:scaleX(1.0764);transform-origin:left center;top:611.0px;font-size:14px;line-height:18px;color:#000;left:848px;background:#f0f0f0;padding:0 2px 0 1px;">領収証・明細書出力設定</div>
<div class="a" style="left:851px;top:639px;width:12px;height:12px;border:1px solid;border-color:#a0a0a0 #fff #fff #a0a0a0;box-shadow:inset 1px 1px 0 #696969,inset -1px -1px 0 #e3e3e3;background:#fff"></div>
<svg class="a" style="left:851px;top:639px" width="12" height="12"><path d="M3 6.5 L5.3 8.8 L10 3.8" stroke="#000" stroke-width="1.9" fill="none"/></svg>
<div class="t" style="transform:scaleX(1.0713);transform-origin:left center;top:636.0px;font-size:14px;line-height:18px;color:#000;left:869px;">領収証(P)</div>
<div class="a" style="left:948px;top:639px;width:12px;height:12px;border:1px solid;border-color:#a0a0a0 #fff #fff #a0a0a0;box-shadow:inset 1px 1px 0 #696969,inset -1px -1px 0 #e3e3e3;background:#fff"></div>
<svg class="a" style="left:948px;top:639px" width="12" height="12"><path d="M3 6.5 L5.3 8.8 L10 3.8" stroke="#000" stroke-width="1.9" fill="none"/></svg>
<div class="t" style="transform:scaleX(1.1771);transform-origin:left center;top:636.0px;font-size:14px;line-height:18px;color:#000;left:965px;">明細書(I)</div>
<div class="grp" style="left:1045px;top:631px;width:182px;height:27px;"></div>
<div class="t" style="transform:scaleX(0.9818);transform-origin:left center;top:622.5px;font-size:13px;line-height:17px;color:#000;left:1053px;background:#f0f0f0;padding:0 2px 0 1px;">出力単位</div>
<svg class="a" style="left:1056px;top:640.0px" width="12" height="12"><circle cx="6.0" cy="6.0" r="5.5" fill="#fff" stroke="#a0a0a0"/></svg>
<div class="t" style="transform:scaleX(1.0385);transform-origin:left center;top:637.5px;font-size:13px;line-height:17px;color:#000;left:1070px;">全て</div>
<svg class="a" style="left:1137px;top:640.0px" width="12" height="12"><circle cx="6.0" cy="6.0" r="5.5" fill="#fff" stroke="#a0a0a0"/><circle cx="6.0" cy="6.0" r="2" fill="#000"/></svg>
<div class="t" style="transform:scaleX(1.0385);transform-origin:left center;top:637.5px;font-size:13px;line-height:17px;color:#000;left:1152px;">診療科別</div>
<div class="grp" style="left:1045px;top:666px;width:182px;height:32px;"></div>
<div class="t" style="transform:scaleX(1.0000);transform-origin:left center;top:657.5px;font-size:13px;line-height:17px;color:#000;left:1053px;background:#f0f0f0;padding:0 2px 0 1px;">明細書用紙</div>
<svg class="a" style="left:1056px;top:679.0px" width="12" height="12"><circle cx="6.0" cy="6.0" r="5.5" fill="#fff" stroke="#a0a0a0"/><circle cx="6.0" cy="6.0" r="2" fill="#000"/></svg>
<div class="t" style="transform:scaleX(0.9423);transform-origin:left center;top:676.5px;font-size:13px;line-height:17px;color:#000;left:1071px;">ロール紙</div>
<svg class="a" style="left:1137px;top:679.0px" width="12" height="12"><circle cx="6.0" cy="6.0" r="5.5" fill="#fff" stroke="#a0a0a0"/></svg>
<div class="t" style="transform:scaleX(0.9132);transform-origin:left center;top:676.5px;font-size:13px;line-height:17px;color:#000;left:1153px;">Ａ４用紙(L)</div>
<div class="a" style="left:14px;top:732px;width:489px;height:21px;background:#a0a0a0;"></div>
<div class="t" style="transform:translateX(-50%) scaleX(1.0357);transform-origin:center center;top:733.0px;font-size:14px;line-height:18px;color:#000;font-weight:bold;left:259px;">調剤</div>
<div class="grp" style="left:15px;top:763px;width:488px;height:207px;"></div>
<div class="t" style="transform:scaleX(1.0690);transform-origin:left center;top:754.0px;font-size:14px;line-height:18px;color:#000;left:22px;background:#f0f0f0;padding:0 2px 0 1px;">領収内訳合計</div>
<div class="t" style="transform:scaleX(1.0952);transform-origin:right center;top:781.0px;font-size:14px;line-height:18px;color:#000;right:1178px;">保険合計金額</div>
<div class="fld" style="left:126px;top:779px;width:120px;height:22px;background:#f0f0f0"></div>
<div class="t" style="top:781.0px;font-size:14px;line-height:18px;color:#000;right:1054px;">¥6,410</div>
<div class="t" style="transform:scaleX(1.0857);transform-origin:right center;top:811.0px;font-size:14px;line-height:18px;color:#000;right:1178px;">定率負担額</div>
<div class="fld" style="left:126px;top:809px;width:120px;height:22px;background:#f0f0f0"></div>
<div class="t" style="top:811.0px;font-size:14px;line-height:18px;color:#000;right:1054px;">¥1,280</div>
<div class="t" style="transform:scaleX(1.0714);transform-origin:right center;top:841.0px;font-size:14px;line-height:18px;color:#000;right:1178px;">介護</div>
<div class="fld" style="left:126px;top:839px;width:120px;height:22px;background:#f0f0f0"></div>
<div class="t" style="top:841.0px;font-size:14px;line-height:18px;color:#000;right:1054px;">¥0</div>
<div class="t" style="transform:scaleX(1.0893);transform-origin:right center;top:872.0px;font-size:14px;line-height:18px;color:#000;right:1178px;">自費金額</div>
<div class="fld" style="left:126px;top:870px;width:120px;height:22px;background:#f0f0f0"></div>
<div class="t" style="top:872.0px;font-size:14px;line-height:18px;color:#000;right:1054px;">¥0</div>
<div class="t" style="transform:scaleX(1.0857);transform-origin:right center;top:781.0px;font-size:14px;line-height:18px;color:#000;right:936px;">施設技術料</div>
<div class="fld" style="left:369px;top:779px;width:119px;height:22px;background:#f0f0f0"></div>
<div class="t" style="top:781.0px;font-size:14px;line-height:18px;color:#000;right:812px;">¥0</div>
<div class="t" style="transform:scaleX(1.0476);transform-origin:right center;top:811.0px;font-size:14px;line-height:18px;color:#000;right:936px;">その他</div>
<div class="fld" style="left:369px;top:809px;width:119px;height:22px;background:#f0f0f0"></div>
<div class="t" style="top:811.0px;font-size:14px;line-height:18px;color:#000;right:812px;">¥0</div>
<div class="t" style="transform:scaleX(1.0857);transform-origin:right center;top:841.0px;font-size:14px;line-height:18px;color:#000;right:936px;">内消費税等</div>
<div class="fld" style="left:369px;top:839px;width:119px;height:22px;background:#f0f0f0"></div>
<div class="t" style="top:841.0px;font-size:14px;line-height:18px;color:#000;right:812px;">¥0</div>
<div class="a" style="left:331px;top:870px;width:12px;height:12px;border:1px solid;border-color:#a0a0a0 #fff #fff #a0a0a0;box-shadow:inset 1px 1px 0 #696969,inset -1px -1px 0 #e3e3e3;background:#fff"></div>
<div class="t" style="transform:scaleX(1.0476);transform-origin:left center;top:867.0px;font-size:14px;line-height:18px;color:#000;left:350px;">多数回</div>
<div class="a" style="left:416px;top:870px;width:12px;height:12px;border:1px solid;border-color:#a0a0a0 #fff #fff #a0a0a0;box-shadow:inset 1px 1px 0 #696969,inset -1px -1px 0 #e3e3e3;background:#fff"></div>
<div class="t" style="transform:scaleX(1.0476);transform-origin:left center;top:867.0px;font-size:14px;line-height:18px;color:#000;left:433px;">７５歳</div>
<div class="t" style="transform:scaleX(1.0893);transform-origin:right center;top:900.0px;font-size:14px;line-height:18px;color:#000;font-weight:bold;right:936px;">請求金額</div>
<div class="a" style="left:365px;top:892px;width:129px;height:33px;background:#4682b4;"></div>
<div class="a" style="left:369px;top:896px;width:121px;height:25px;background:#c0c0c0;border:1px solid;border-color:#808080 #fff #fff #808080"></div>
<div class="t" style="transform:scaleX(0.9257);transform-origin:right center;top:899.0px;font-size:15px;line-height:19px;color:#000;font-weight:bold;font-family:'Liberation Mono',monospace;right:809px;">¥1,280</div>
<div class="a" style="left:24px;top:932px;width:470px;height:1px;background:#a0a0a0;"></div>
<div class="a" style="left:24px;top:933px;width:470px;height:1px;background:#fff;"></div>
<div class="t" style="transform:scaleX(1.0714);transform-origin:left center;top:943.0px;font-size:14px;line-height:18px;color:#000;left:20px;">配送</div>
<div class="a" style="left:57px;top:942px;width:188px;height:21px;background:#f0f0f0;border:1px solid;border-color:#808080 #fff #fff #808080"></div>
<div class="hb" style="left:229px;top:944px;width:15px;height:17px;"></div>
<svg class="a" style="left:233px;top:951px" width="7" height="4"><path d="M0 0 H7 L3.5 4 Z" fill="#a0a0a0"/></svg>
<div class="a" style="left:252px;top:946px;width:12px;height:12px;border:1px solid;border-color:#a0a0a0 #fff #fff #a0a0a0;box-shadow:inset 1px 1px 0 #696969,inset -1px -1px 0 #e3e3e3;background:#f0f0f0"></div>
<div class="t" style="transform:scaleX(1.0357);transform-origin:left center;top:943.0px;font-size:14px;line-height:18px;color:#a0a0a0;left:270px;">着払</div>
<div class="a" style="left:307px;top:946px;width:12px;height:12px;border:1px solid;border-color:#a0a0a0 #fff #fff #a0a0a0;box-shadow:inset 1px 1px 0 #696969,inset -1px -1px 0 #e3e3e3;background:#f0f0f0"></div>
<div class="t" style="transform:scaleX(1.0357);transform-origin:left center;top:943.0px;font-size:14px;line-height:18px;color:#a0a0a0;left:325px;">信書</div>
<div class="t" style="transform:scaleX(1.0714);transform-origin:left center;top:943.0px;font-size:14px;line-height:18px;color:#000;left:363px;">配送料</div>
<div class="fld" style="left:414px;top:941px;width:83px;height:22px;background:#f0f0f0"></div>
<div class="t" style="top:943.5px;font-size:13px;line-height:17px;color:#a0a0a0;right:802px;">¥0</div>
<div class="a" style="left:510px;top:732px;width:415px;height:21px;background:#a0a0a0;"></div>
<div class="t" style="transform:translateX(-50%) scaleX(1.0000);transform-origin:center center;top:733.0px;font-size:14px;line-height:18px;color:#000;font-weight:bold;left:717px;">ＯＴＣ</div>
<div class="grp" style="left:510px;top:763px;width:414px;height:172px;"></div>
<div class="t" style="transform:scaleX(1.0495);transform-origin:left center;top:754.0px;font-size:14px;line-height:18px;color:#000;left:519px;background:#f0f0f0;padding:0 2px 0 1px;">ＯＴＣ購入金額</div>
<div class="t" style="transform:scaleX(1.0357);transform-origin:right center;top:821.0px;font-size:14px;line-height:18px;color:#000;right:690px;">小計</div>
<div class="fld" style="left:614px;top:819px;width:120px;height:22px;background:#b9d1ea"></div>
<div class="t" style="top:821.5px;font-size:13px;line-height:17px;color:#000;right:564px;">¥0</div>
<div class="t" style="transform:scaleX(1.0571);transform-origin:right center;top:856.0px;font-size:14px;line-height:18px;color:#000;right:690px;">（本体価格</div>
<div class="fld" style="left:614px;top:854px;width:120px;height:22px;background:#b9d1ea"></div>
<div class="t" style="top:856.5px;font-size:13px;line-height:17px;color:#000;right:564px;">¥0</div>
<div class="t" style="transform:scaleX(1.0238);transform-origin:right center;top:892.0px;font-size:14px;line-height:18px;color:#000;right:690px;">消費税</div>
<div class="fld" style="left:614px;top:890px;width:120px;height:22px;background:#b9d1ea"></div>
<div class="t" style="top:892.5px;font-size:13px;line-height:17px;color:#000;right:564px;">¥0</div>
<div class="t" style="top:856.0px;font-size:14px;line-height:18px;color:#000;left:742px;">）</div>
<div class="t" style="transform:scaleX(1.0357);transform-origin:left center;top:894.0px;font-size:14px;line-height:18px;color:#000;font-weight:bold;left:744px;">合計</div>
<div class="a" style="left:782px;top:884px;width:134px;height:34px;background:#4682b4;"></div>
<div class="a" style="left:788px;top:888px;width:122px;height:25px;background:#b9d1ea;border:1px solid;border-color:#808080 #fff #fff #808080"></div>
<div class="t" style="top:890.5px;font-size:15px;line-height:19px;color:#000;font-weight:bold;font-family:'Liberation Mono',monospace;right:390px;">¥0</div>
<div class="btn" style="left:793px;top:948px;width:89px;height:40px;"></div>
<div class="t" style="transform:translateX(-50%) scaleX(1.0714);transform-origin:center center;top:950.5px;font-size:14px;line-height:18px;color:#a0a0a0;left:837.5px;">初回質問</div>
<div class="t" style="transform:translateX(-50%) scaleX(1.0714);transform-origin:center center;top:965.5px;font-size:14px;line-height:18px;color:#a0a0a0;left:837.5px;">票確認</div>
<div class="t" style="transform:scaleX(1.0833);transform-origin:right center;top:740.5px;font-size:15px;line-height:19px;color:#000;right:236px;">未収金額</div>
<div class="fld" style="left:1065px;top:738px;width:178px;height:24px;background:#f0f0f0"></div>
<div class="t" style="top:741.0px;font-size:14px;line-height:18px;color:#000;right:57px;">¥0</div>
<div class="t" style="transform:scaleX(1.0800);transform-origin:right center;top:777.5px;font-size:15px;line-height:19px;color:#000;right:236px;">入金済金額</div>
<div class="fld" style="left:1065px;top:775px;width:178px;height:24px;background:#f0f0f0"></div>
<div class="t" style="top:777.5px;font-size:15px;line-height:19px;color:#000;font-weight:bold;right:57px;">¥0</div>
<div class="t" style="transform:scaleX(1.0000);transform-origin:right center;top:809.5px;font-size:21px;line-height:25px;color:#000;right:244px;-webkit-text-stroke:0.35px #000;">請求金額</div>
<div class="fld" style="left:1065px;top:810px;width:178px;height:24px;background:#f0f0f0"></div>
<div class="t" style="transform:scaleX(1.0789);transform-origin:right center;top:810.0px;font-size:20px;line-height:24px;color:#000;right:56px;">¥1,280</div>
<div class="grp" style="left:950px;top:857px;width:299px;height:77px;"></div>
<div class="t" style="transform:scaleX(1.0508);transform-origin:left center;top:848.0px;font-size:14px;line-height:18px;color:#000;left:959px;background:#f0f0f0;padding:0 2px 0 1px;">入金状態</div>
<div class="t" style="transform:scaleX(1.1071);transform-origin:left center;top:877.0px;font-size:14px;line-height:18px;color:#000;left:983px;">調剤</div>
<div class="a" style="left:1026px;top:877px;width:75px;height:21px;background:#ffb6c1;border:1px solid;border-color:#f0f0f0 #fff #fff #f0f0f0"></div>
<div class="t" style="transform:translateX(-50%) scaleX(1.0417);transform-origin:center center;top:877.5px;font-size:16px;line-height:20px;color:#000;font-weight:bold;left:1063px;">未会計</div>
<div class="t" style="transform:scaleX(1.0238);transform-origin:left center;top:903.0px;font-size:14px;line-height:18px;color:#000;left:970px;">ＯＴＣ</div>
<div class="fld" style="left:1026px;top:902px;width:75px;height:21px;background:#f0f0f0"></div>
<div class="t" style="transform:translateX(-50%);transform-origin:center center;top:904.5px;font-size:12px;line-height:16px;color:#000;left:1063.5px;">－</div>
<div class="a" style="left:1149px;top:908px;width:12px;height:12px;border:1px solid;border-color:#a0a0a0 #fff #fff #a0a0a0;box-shadow:inset 1px 1px 0 #696969,inset -1px -1px 0 #e3e3e3;background:#f0f0f0"></div>
<div class="t" style="transform:scaleX(1.0714);transform-origin:left center;top:905.0px;font-size:14px;line-height:18px;color:#a0a0a0;left:1167px;">合算</div>
<div class="btn" style="left:930px;top:948px;width:90px;height:40px;"></div>
<div class="t" style="transform:translateX(-50%) scaleX(1.0462);transform-origin:center center;top:957.5px;font-size:15px;line-height:19px;color:#a0a0a0;left:975.0px;">→確認(V)</div>
<div class="btn" style="left:1060px;top:948px;width:90px;height:40px;"></div>
<div class="t" style="transform:translateX(-50%) scaleX(1.0427);transform-origin:center center;top:957.5px;font-size:15px;line-height:19px;color:#a0a0a0;left:1105.0px;">登録(R)</div>
<div class="btn" style="left:1165px;top:948px;width:90px;height:40px;"></div>
<div class="t" style="transform:translateX(-50%) scaleX(1.0178);transform-origin:center center;top:957.5px;font-size:15px;line-height:19px;color:#000;left:1210.0px;">閉じる(C)</div>
<div class="a" style="left:5px;top:999px;width:1259px;height:4px;background:#fff;"></div>
<div class="a" style="left:5px;top:1003px;width:1259px;height:1px;background:#a0a0a0;"></div>
<div class="a" style="left:1264px;top:34px;width:21px;height:970px;background:#dadada;border-left:1px solid #a0a0a0"></div>
<div class="a" style="left:1264px;top:34px;width:21px;height:21px;background:#fff;border-bottom:1px solid #a0a0a0"></div>
<svg class="a" style="left:1269px;top:40px" width="11" height="8"><path d="M1 6.5 L5.5 2 L10 6.5" stroke="#606060" stroke-width="1.3" fill="none"/></svg>
<div class="a" style="left:1264px;top:933px;width:21px;height:50px;background:#fff;border-top:1px solid #c8c8c8"></div>
<div class="a" style="left:1264px;top:983px;width:21px;height:21px;background:#fff;border-top:1px solid #c8c8c8"></div>
<svg class="a" style="left:1269px;top:990px" width="11" height="8"><path d="M1 1.5 L5.5 6 L10 1.5" stroke="#606060" stroke-width="1.3" fill="none"/></svg>
<div class="a" style="left:1270px;top:489px;width:9px;height:2px;background:#606060;"></div>
<div class="a" style="left:1270px;top:493px;width:9px;height:2px;background:#606060;"></div>
<div class="a" style="left:1270px;top:497px;width:9px;height:2px;background:#606060;"></div>
<div class="a" style="left:5px;top:1004px;width:1259px;height:21px;background:#dadada;border-top:1px solid #a0a0a0"></div>
<div class="a" style="left:5px;top:1004px;width:21px;height:21px;background:#fff;border-right:1px solid #c8c8c8"></div>
<svg class="a" style="left:11px;top:1009px" width="8" height="11"><path d="M6.5 1 L2 5.5 L6.5 10" stroke="#606060" stroke-width="1.3" fill="none"/></svg>
<div class="a" style="left:1222px;top:1004px;width:21px;height:21px;background:#fff;border-right:1px solid #c8c8c8"></div>
<div class="a" style="left:1243px;top:1004px;width:21px;height:21px;background:#fff;border-right:1px solid #c8c8c8"></div>
<svg class="a" style="left:1250px;top:1009px" width="8" height="11"><path d="M1.5 1 L6 5.5 L1.5 10" stroke="#606060" stroke-width="1.3" fill="none"/></svg>
<div class="a" style="left:1264px;top:1004px;width:21px;height:21px;background:#f0f0f0;"></div>
<div class="a" style="left:619px;top:1010px;width:2px;height:9px;background:#606060;"></div>
<div class="a" style="left:623px;top:1010px;width:2px;height:9px;background:#606060;"></div>
<div class="a" style="left:627px;top:1010px;width:2px;height:9px;background:#606060;"></div></body></html>
